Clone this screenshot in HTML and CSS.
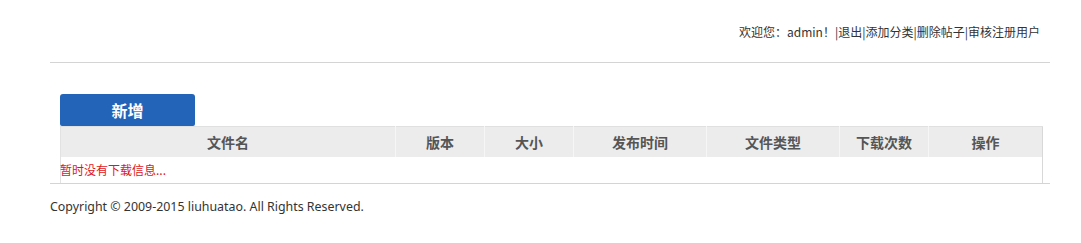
FILE: index.html
```html
<!DOCTYPE html>
<html lang="zh-CN">
<head>
<meta charset="utf-8">
<title>下载管理</title>
<link rel="stylesheet" href="styles.css">
</head>
<body>
<div class="page">
  <div class="topbar">
    <span class="welcome">欢迎您：admin！|<a href="#">退出</a>|<a href="#">添加分类</a>|<a href="#">删除帖子</a>|<a href="#">审核注册用户</a></span>
  </div>
  <div class="main">
    <button class="btn-add" type="button">新增</button>
    <table class="list">
      <colgroup>
        <col class="c-name"><col class="c-ver"><col class="c-size"><col class="c-time"><col class="c-type"><col class="c-count"><col class="c-op">
      </colgroup>
      <thead>
        <tr>
          <th>文件名</th><th>版本</th><th>大小</th><th>发布时间</th><th>文件类型</th><th>下载次数</th><th>操作</th>
        </tr>
      </thead>
      <tbody>
        <tr><td class="empty" colspan="7">暂时没有下载信息...</td></tr>
      </tbody>
    </table>
  </div>
  <div class="footer">Copyright © 2009-2015 liuhuatao. All Rights Reserved.</div>
</div>
</body>
</html>
```
FILE: styles.css
```css
html, body {
  margin: 0;
  padding: 0;
  background: #fff;
}
body {
  font-family: "Noto Sans", "Noto Sans CJK SC", sans-serif;
  font-size: 12px;
  color: #333;
}
.page {
  width: 1000px;
  margin-left: 50px;
}
.topbar {
  height: 63px;
  border-bottom: 1px solid #d4d4d4;
  box-sizing: border-box;
  padding: 23px 10px 0 0;
  text-align: right;
  line-height: 18px;
}
.welcome {
  font-family: "Noto Sans CJK SC", sans-serif;
}
.welcome a {
  color: #333;
  text-decoration: none;
}
.main {
  padding: 31px 8px 0 10px;
}
.btn-add {
  display: block;
  width: 135px;
  height: 32px;
  margin: 0;
  padding: 0;
  border: none;
  border-radius: 3px 3px 2px 2px;
  background: #2364b9;
  color: #fff;
  font-family: "Noto Sans CJK SC", sans-serif;
  font-size: 16px;
  font-weight: bold;
  line-height: 32px;
}
.list {
  width: 982px;
  border-collapse: collapse;
  table-layout: fixed;
  border-left: 1px solid #e2e2e2;
  border-right: 1px solid #d8d8d8;
}
.c-name { width: 335px; }
.c-ver { width: 89px; }
.c-size { width: 89px; }
.c-time { width: 133px; }
.c-type { width: 133px; }
.c-count { width: 89px; }
.c-op { width: 114px; }
.list th {
  height: 30px;
  padding: 0;
  background: #ececec;
  border-top: 1px solid #e0e0e0;
  border-right: 1px solid #f6f6f6;
  color: #555;
  font-family: "Noto Sans CJK SC", sans-serif;
  font-size: 14px;
  font-weight: bold;
  text-align: center;
  box-sizing: border-box;
}
.list th:last-child {
  border-right: none;
}
.list td.empty {
  height: 26px;
  padding: 0;
  color: #e0161b;
  font-family: "Noto Sans CJK SC", sans-serif;
  font-size: 12px;
  line-height: 26px;
  text-align: left;
  position: relative;
  left: -1px;
}
.footer {
  border-top: 1px solid #d4d4d4;
  padding-top: 14px;
  line-height: 18px;
  font-size: 12.4px;
  color: #333;
}
```
